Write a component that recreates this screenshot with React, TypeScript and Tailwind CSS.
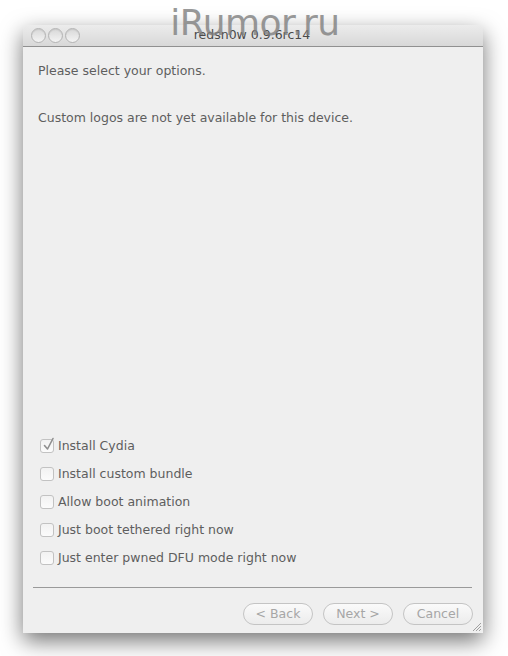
import React from "react";

const font = { fontFamily: '"Lucida Grande", "DejaVu Sans", "Noto Sans", sans-serif' };

function Light() {
  return (
    <div className="w-[15px] h-[15px] rounded-full border border-[#b4b4b4] bg-gradient-to-b from-[#d8d8d8] via-[#e6e6e6] to-[#f4f4f4] shadow-[inset_0_1px_1px_rgba(0,0,0,0.08)]" />
  );
}

function Check({ checked, label }: { checked?: boolean; label: string }) {
  return (
    <div className="flex items-center h-[28px]">
      <div className="relative w-[14px] h-[14px] ml-[2px] rounded-[3px] border border-[#c2c2c2] bg-gradient-to-b from-[#f2f2f2] to-[#fbfbfb]">
        {checked && (
          <svg className="absolute left-[1px] top-[-3px]" width="14" height="15" viewBox="0 0 14 15">
            <path d="M2.5 8.5 L5.5 12 L11 1.5" fill="none" stroke="#8f8f8f" strokeWidth="1.6" strokeLinecap="round" strokeLinejoin="round" />
          </svg>
        )}
      </div>
      <span className="ml-[4px] text-[12.5px] text-[#5e5e5e]">{label}</span>
    </div>
  );
}

function Btn({ label }: { label: string }) {
  return (
    <div className="w-[70px] h-[22px] rounded-full border border-[#c4c4c4] bg-gradient-to-b from-[#fafafa] to-[#ececec] flex items-center justify-center text-[12.5px] text-[#a6a6a6]">
      {label}
    </div>
  );
}

export default function App() {
  return (
    <div className="w-[508px] h-[656px] bg-white overflow-hidden relative" style={font}>
      <div className="absolute left-0 right-0 top-[2px] flex justify-center pointer-events-none z-10">
        <span className="ml-[2px] text-[36px] leading-[42px] text-[#808080] opacity-80" style={{ fontFamily: '"DejaVu Sans", sans-serif', letterSpacing: "-0.5px" }}>
          iRumor.ru
        </span>
      </div>
      <div className="ml-[23px] mt-[25px] w-[460px] h-[608px] flex flex-col bg-[#efefef] rounded-t-[5px] shadow-[0_8px_22px_rgba(0,0,0,0.55)]">
        <div className="h-[22px] relative flex items-center rounded-t-[5px] border-b border-[#909090] bg-gradient-to-b from-[#ececec] to-[#d8d8d8]">
          <div className="flex gap-[2px] ml-[8px]">
            <Light />
            <Light />
            <Light />
          </div>
          <div className="absolute inset-0 flex items-center justify-center text-[12.5px] text-[#4a4a4a] pr-[2px]">
            redsn0w 0.9.6rc14
          </div>
        </div>
        <div className="flex-1 flex flex-col px-[15px] text-[12.5px] text-[#5e5e5e]">
          <div className="mt-[15px] h-[18px] leading-[18px]">Please select your options.</div>
          <div className="mt-[29px] h-[18px] leading-[18px]">Custom logos are not yet available for this device.</div>
          <div className="flex-1" />
          <div className="flex flex-col mb-[15px]">
            <Check checked label="Install Cydia" />
            <Check label="Install custom bundle" />
            <Check label="Allow boot animation" />
            <Check label="Just boot tethered right now" />
            <Check label="Just enter pwned DFU mode right now" />
          </div>
        </div>
        <div className="ml-[10px] mr-[11px] h-px bg-[#9a9a9a]" />
        <div className="relative h-[45px] flex items-start justify-end gap-[10px] pr-[10px] pt-[15px]">
          <Btn label="< Back" />
          <Btn label="Next >" />
          <Btn label="Cancel" />
          <svg className="absolute right-[1px] bottom-[1px]" width="11" height="11" viewBox="0 0 11 11">
            <path d="M10 2 L2 10 M10 5 L5 10 M10 8 L8 10" stroke="#a0a0a0" strokeWidth="1" />
          </svg>
        </div>
      </div>
    </div>
  );
}
